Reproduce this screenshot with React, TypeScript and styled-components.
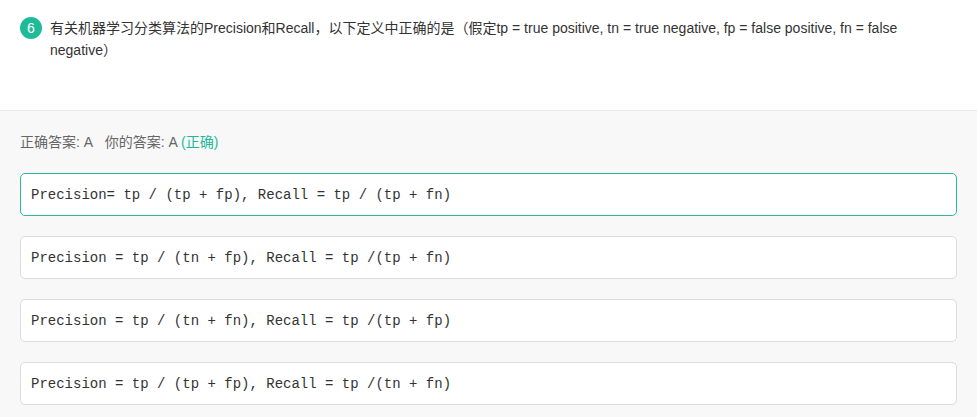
import styled, { createGlobalStyle } from 'styled-components';

const GlobalStyle = createGlobalStyle`
  html, body {
    margin: 0;
    padding: 0;
    background: #f8f8f8;
  }
  body {
    font-family: "Liberation Sans", Arial, "Noto Sans CJK SC", sans-serif;
    color: #333;
  }
`;

const Page = styled.div`
  width: 977px;
  min-height: 417px;
  background: #f8f8f8;
`;

const Question = styled.div`
  display: flex;
  align-items: flex-start;
  background: #fff;
  padding: 17px 20px 49px 20px;
  border-bottom: 1px solid #e8e8e8;
`;

const Badge = styled.span`
  flex: none;
  width: 22px;
  height: 22px;
  border-radius: 50%;
  background: #1fba98;
  color: #fff;
  font-size: 14px;
  line-height: 22px;
  text-align: center;
  margin-right: 8px;
`;

const Stem = styled.div`
  flex: 1;
  font-size: 14px;
  line-height: 22px;
  color: #333;
  padding-right: 48px;
`;

const Answers = styled.div`
  padding: 20px 20px 0 20px;
  display: flex;
  flex-direction: column;
`;

const Result = styled.div`
  font-size: 14px;
  line-height: 22px;
  color: #666;
  margin-bottom: 20px;
`;

const Ok = styled.span`
  color: #1fba98;
`;

const Option = styled.div<{ $right?: boolean }>`
  box-sizing: border-box;
  height: 43px;
  margin-bottom: 20px;
  padding: 0 10px;
  display: flex;
  align-items: center;
  background: #fff;
  border: 1px solid ${(p) => (p.$right ? '#2cb894' : '#dcdcdc')};
  border-radius: 5px;
  font-family: "Liberation Mono", "Courier New", monospace;
  font-size: 14px;
  color: #333;
  white-space: pre;
`;

const options = [
  { text: 'Precision= tp / (tp + fp), Recall = tp / (tp + fn)', right: true },
  { text: 'Precision = tp / (tn + fp), Recall = tp /(tp + fn)' },
  { text: 'Precision = tp / (tn + fn), Recall = tp /(tp + fp)' },
  { text: 'Precision = tp / (tp + fp), Recall = tp /(tn + fn)' },
];

export default function App() {
  return (
    <Page>
      <GlobalStyle />
      <Question>
        <Badge>6</Badge>
        <Stem>
          有关机器学习分类算法的Precision和Recall，以下定义中正确的是（假定tp = true positive, tn = true negative, fp = false positive, fn = false negative）
        </Stem>
      </Question>
      <Answers>
        <Result>
          正确答案: A&nbsp;&nbsp; 你的答案: A <Ok>(正确)</Ok>
        </Result>
        {options.map((o) => (
          <Option key={o.text} $right={o.right}>
            {o.text}
          </Option>
        ))}
      </Answers>
    </Page>
  );
}
